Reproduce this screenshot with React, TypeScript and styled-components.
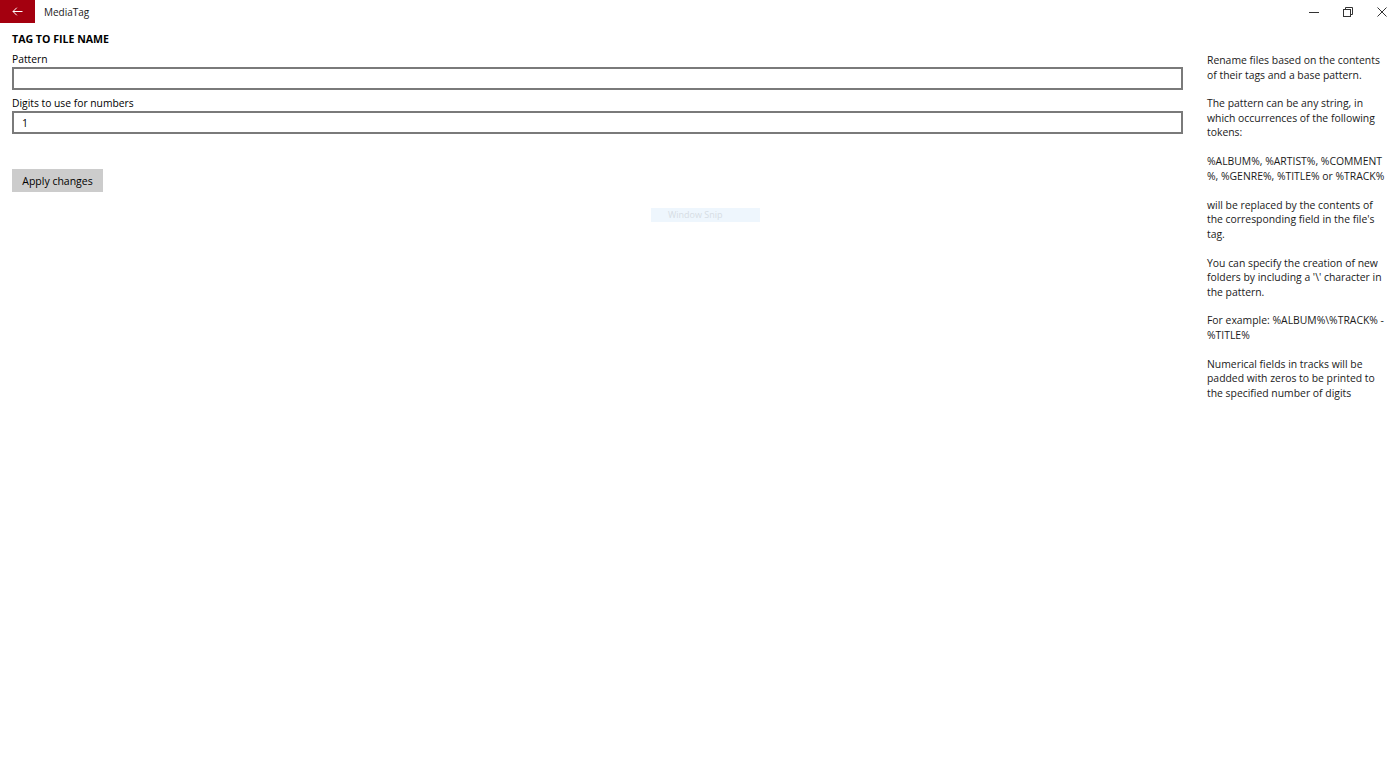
import React from "react";
import styled, { createGlobalStyle } from "styled-components";

const GlobalStyle = createGlobalStyle`
  html, body {
    margin: 0;
    padding: 0;
    background: #ffffff;
    font-family: "Open Sans", "Noto Sans", sans-serif;
    color: #000000;
  }
`;

const Page = styled.div`
  width: 1399px;
  height: 758px;
  display: flex;
  flex-direction: column;
  position: relative;
  overflow: hidden;
`;

const TitleBar = styled.div`
  height: 23px;
  display: flex;
  align-items: center;
`;

const BackButton = styled.div`
  width: 35px;
  height: 23px;
  background: #a4000f;
  display: flex;
  align-items: center;
  justify-content: center;
`;

const AppTitle = styled.div`
  margin-left: 9px;
  font-size: 10px;
  color: #1a1a1a;
  flex: 1;
`;

const WindowControl = styled.div`
  width: 34px;
  height: 23px;
  display: flex;
  align-items: center;
  justify-content: center;
`;

const Content = styled.div`
  display: flex;
  padding: 8px 12px 0 12px;
  gap: 24px;
`;

const Form = styled.div`
  flex: 1;
  display: flex;
  flex-direction: column;
`;

const Heading = styled.div`
  font-size: 10.6px;
  font-weight: 700;
  height: 16px;
  line-height: 16px;
  margin-bottom: 5px;
`;

const Label = styled.div`
  font-size: 10.3px;
  height: 15px;
  line-height: 15px;
`;

const Field = styled.div<{ $gap?: number }>`
  height: 23px;
  box-sizing: border-box;
  border: 2px solid #7a7a7a;
  font-size: 10.5px;
  display: flex;
  align-items: center;
  padding-left: 8px;
  margin-bottom: ${(p) => p.$gap ?? 0}px;
`;

const ApplyButton = styled.div`
  width: 91px;
  height: 23px;
  background: #cccccc;
  font-size: 10.5px;
  display: flex;
  align-items: center;
  justify-content: center;
`;

const Help = styled.div`
  width: 180px;
  padding-top: 22px;
  font-size: 10.4px;
  line-height: 14.5px;
  color: #1a1a1a;
`;

const HelpPara = styled.p`
  margin: 0 0 14.4px 0;
  white-space: nowrap;
`;

const Snip = styled.div`
  position: absolute;
  left: 651px;
  top: 208px;
  width: 109px;
  height: 14px;
  background: #eef6fd;
  color: #d6dde4;
  font-size: 9px;
  line-height: 14px;
  padding-left: 17px;
  box-sizing: border-box;
`;

const App = () => {
  return (
    <Page>
      <GlobalStyle />
      <TitleBar>
        <BackButton>
          <svg width="11" height="9" viewBox="0 0 11 9" fill="none" stroke="#ffffff" strokeWidth="1">
            <path d="M10.5 4.5H1M4.8 0.7L1 4.5L4.8 8.3" />
          </svg>
        </BackButton>
        <AppTitle>MediaTag</AppTitle>
        <WindowControl>
          <svg width="10" height="10" viewBox="0 0 10 10" stroke="#333" strokeWidth="1">
            <path d="M0 5.5H10" />
          </svg>
        </WindowControl>
        <WindowControl>
          <svg width="10" height="10" viewBox="0 0 10 10" fill="none" stroke="#333" strokeWidth="1">
            <rect x="0.5" y="2.5" width="7" height="7" />
            <path d="M2.5 2.5V0.5H9.5V7.5H7.5" />
          </svg>
        </WindowControl>
        <WindowControl>
          <svg width="10" height="10" viewBox="0 0 10 10" stroke="#333" strokeWidth="1">
            <path d="M0.5 0.5L9.5 9.5M9.5 0.5L0.5 9.5" />
          </svg>
        </WindowControl>
      </TitleBar>
      <Content>
        <Form>
          <Heading>TAG TO FILE NAME</Heading>
          <Label>Pattern</Label>
          <Field $gap={6} />
          <Label>Digits to use for numbers</Label>
          <Field $gap={35}>1</Field>
          <ApplyButton>Apply changes</ApplyButton>
        </Form>
        <Help>
          <HelpPara>
            Rename files based on the contents
            <br />
            of their tags and a base pattern.
          </HelpPara>
          <HelpPara>
            The pattern can be any string, in
            <br />
            which occurrences of the following
            <br />
            tokens:
          </HelpPara>
          <HelpPara>
            %ALBUM%, %ARTIST%, %COMMENT
            <br />
            %, %GENRE%, %TITLE% or %TRACK%
          </HelpPara>
          <HelpPara>
            will be replaced by the contents of
            <br />
            the corresponding field in the file's
            <br />
            tag.
          </HelpPara>
          <HelpPara>
            You can specify the creation of new
            <br />
            folders by including a '\' character in
            <br />
            the pattern.
          </HelpPara>
          <HelpPara>
            For example: %ALBUM%\%TRACK% -
            <br />
            %TITLE%
          </HelpPara>
          <HelpPara>
            Numerical fields in tracks will be
            <br />
            padded with zeros to be printed to
            <br />
            the specified number of digits
          </HelpPara>
        </Help>
      </Content>
      <Snip>Window Snip</Snip>
    </Page>
  );
};

export default App;
